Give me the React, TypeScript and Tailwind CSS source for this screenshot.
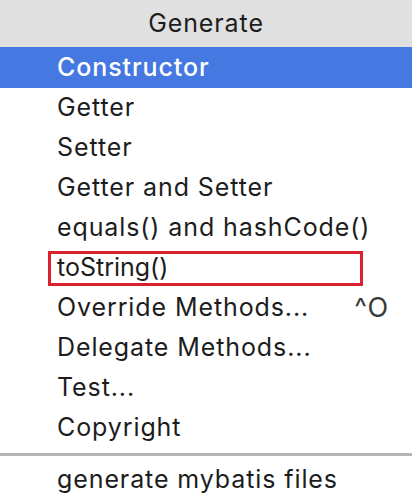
import React from "react";

const items = [
  "Getter",
  "Setter",
  "Getter and Setter",
  "equals() and hashCode()",
];

export default function App() {
  return (
    <div
      className="w-[412px] h-[502px] bg-white overflow-hidden text-[#1d1d1d] text-[25px] tracking-[0.9px]"
      style={{ fontFamily: "Inter, 'Open Sans', sans-serif" }}
    >
      <div className="h-[47px] bg-[#e0e0e0] flex items-center justify-center">
        Generate
      </div>
      <div className="h-[41px] bg-[#4678e1] text-white font-medium flex items-center pl-[57px]">
        Constructor
      </div>
      {items.map((t) => (
        <div key={t} className="h-[40px] flex items-center pl-[57px]">
          {t}
        </div>
      ))}
      <div className="h-[40px] flex items-center pl-[48px] pr-[49px]">
        <div className="flex-1 h-[35px] border-[3px] border-[#d9222e] flex items-center pl-[6px] tracking-[0px]">
          toString()
        </div>
      </div>
      <div className="h-[40px] flex items-center pl-[57px] pr-[23px]">
        <span className="flex-1">Override Methods...</span>
        <span className="text-[#3a3a3a] text-[27px]">^O</span>
      </div>
      {["Delegate Methods...", "Test...", "Copyright"].map((t) => (
        <div key={t} className="h-[40px] flex items-center pl-[57px]">
          {t}
        </div>
      ))}
      <div className="h-[12px] flex items-center">
        <div className="w-full h-[3px] bg-[#b5b5b5]" />
      </div>
      <div className="h-[40px] flex items-center pl-[57px]">
        generate mybatis files
      </div>
    </div>
  );
}
